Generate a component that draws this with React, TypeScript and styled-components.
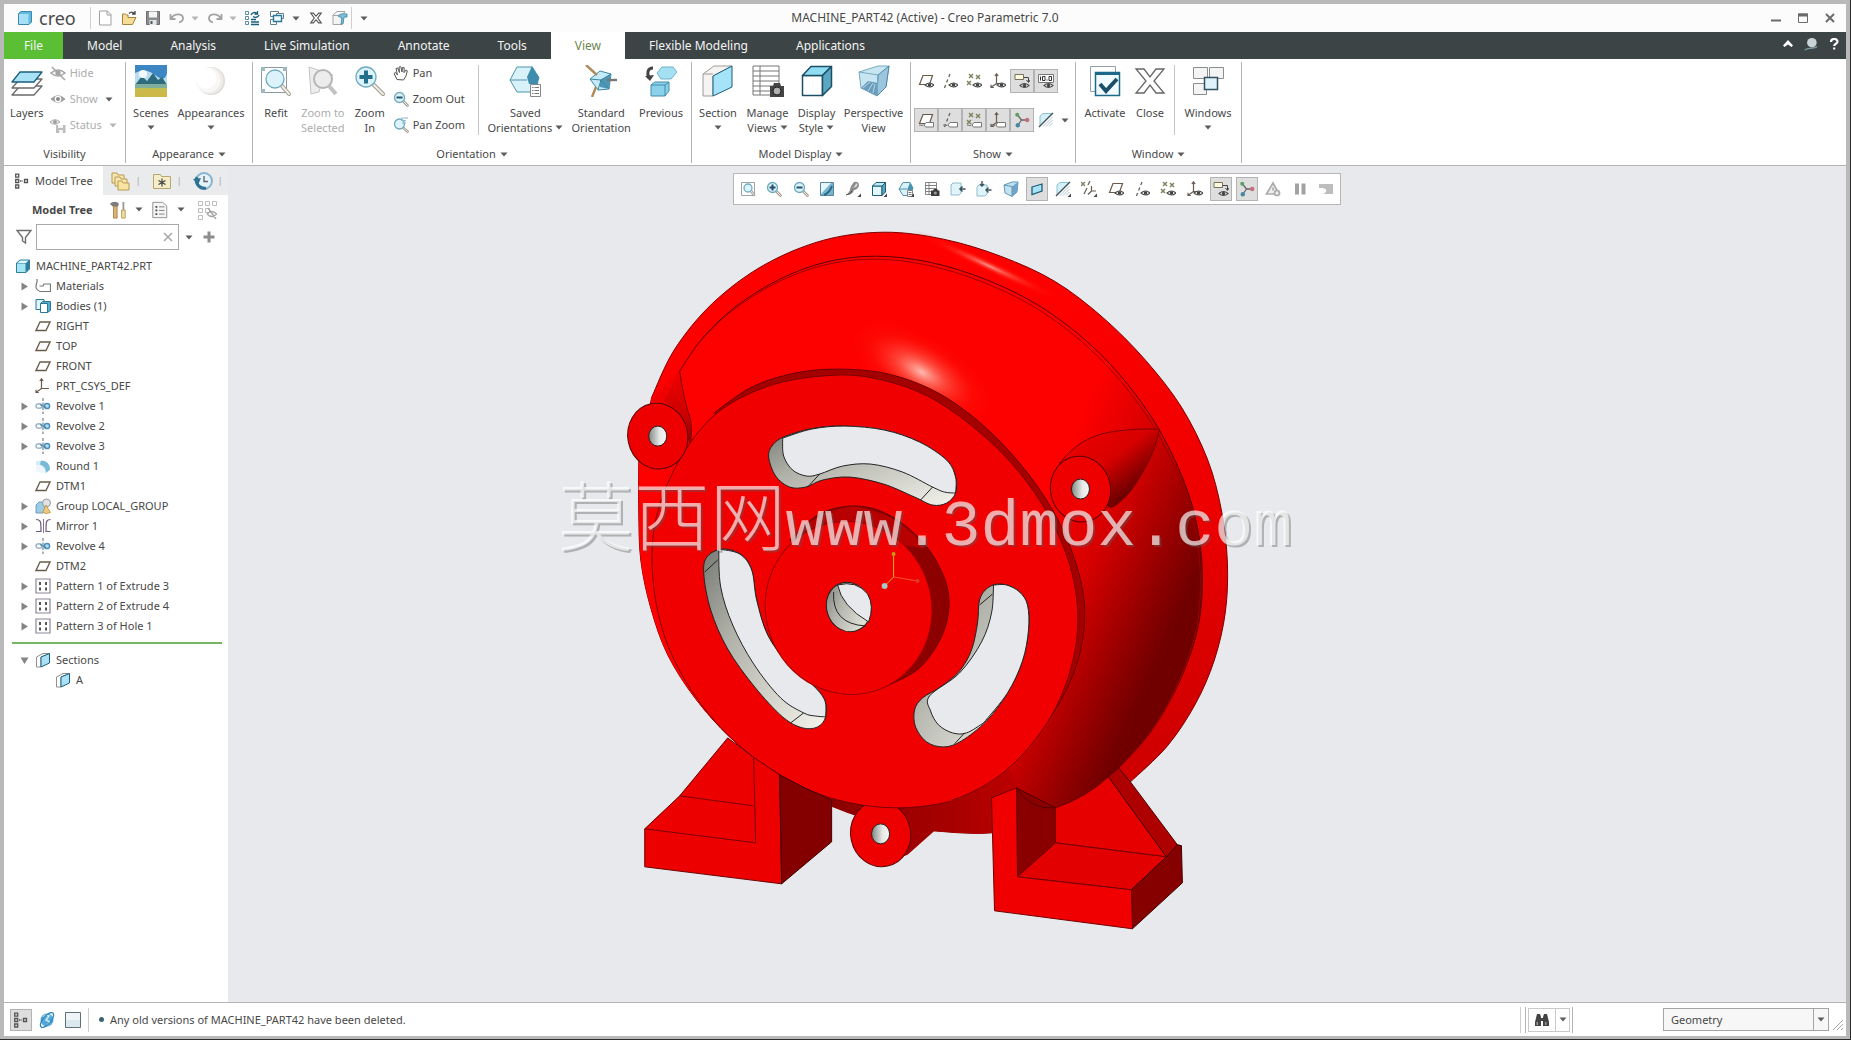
import React, { ReactNode } from "react";
import styled, { createGlobalStyle, css } from "styled-components";

const c = {
  frame: "#b9b9b9",
  bar: "#3c4446",
  text: "#484848",
  faded: "#adadad",
  line: "#b4b4b4",
  green: "#5abf35",
  canvas: "#e7e9ed",
  pressed: "#dedede",
  sky: "#a9e2f5",
  teal: "#1b5f7a",
};

const Global = createGlobalStyle`
  * { box-sizing: border-box; }
  html, body, #root { height: 100%; }
  body { margin: 0; background: #2b2b2b; overflow: hidden; }
  body, button, input, select { font-family: "Noto Sans", "Open Sans", "Noto Sans CJK SC", sans-serif; font-size: 11px; color: ${c.text}; }
  button { background: none; border: 0; padding: 0; margin: 0; }
  h1, h2, ul, p { margin: 0; padding: 0; font-weight: normal; list-style: none; }
  svg { display: block; flex: none; }
`;

/* ---------- icon parts ---------- */

const Eye = ({ x = 0, y = 0 }: { x?: number; y?: number }) => (
  <g transform={`translate(${x} ${y})`}>
    <path d="M0 3Q4.500 -1 9 3Q4.500 7 0 3Z" fill="#fff" stroke="#4a4a4a" strokeWidth="1.100" />
    <circle cx="4.500" cy="3" r="1.800" fill="#444" />
  </g>
);
const Tag = () => (
  <g fill="#fff" stroke="#777">
    <path d="M1 13.500c1.500-2 2 1.500 4.500-.5" fill="none" />
    <path d="M6 13l2-2.500h7.500V15H7.500z" />
  </g>
);
const Cross = ({ x, y }: { x: number; y: number }) => (
  <path d={`M${x} ${y}l4 4m0-4l-4 4`} stroke="#77835a" strokeWidth="1.400" />
);
const Glass = ({ x = 7, y = 7, r = 5, end = 15 }: { x?: number; y?: number; r?: number; end?: number }) => (
  <g>
    <path d={`M${x + r * 0.8} ${y + r * 0.8}L${end} ${end}`} stroke="#a39a90" strokeWidth={r > 6 ? 4 : 2.6} strokeLinecap="round" />
    <path d={`M${x + r * 0.8} ${y + r * 0.8}L${end} ${end}`} stroke="#f4efe8" strokeWidth={r > 6 ? 2 : 1} strokeLinecap="round" />
    <circle cx={x} cy={y} r={r} fill="#dcf3fb" stroke="#6fabbf" strokeWidth="1.300" />
  </g>
);
const planeShape = <path d="M5 2.500h9.500l-3 9H1.500z" fill="#fff" stroke="#6a5a48" strokeWidth="1.200" />;
const axisShape = <path d="M8 1L6.800 4M5.800 6.500L4.600 9.500M3.600 12L2.500 15" stroke="#6a6358" strokeWidth="1.300" />;
const pointsShape = <g fill="none"><Cross x={3} y={1} /><Cross x={10} y={2} /><Cross x={1} y={8} /></g>;
const csysShape = <path d="M6.500 1v9.500H14M6.500 10.500L1.500 14M4.800 3L6.500 .8L8.200 3M1 11.800V14.500h2.800" fill="none" stroke="#6a5b50" strokeWidth="1.200" />;
const spinShape = (
  <g>
    <path d="M3.500 3L7.500 8H13M7.500 8L4 13" stroke="#666" strokeWidth="1.300" fill="none" />
    <circle cx="3.200" cy="2.800" r="2" fill="#5d9e63" />
    <circle cx="13.200" cy="8" r="2.200" fill="#c4707c" />
    <circle cx="3.800" cy="13.200" r="2.200" fill="#4987a5" />
  </g>
);
const noteShape = <g><path d="M1 1.500h8.500v5H1z" fill="#fffbe0" stroke="#77705c" /><path d="M10 4.500h4.500V9M12.500 7l2 2.500l1.500-2.500" fill="none" stroke="#444" /></g>;
const boxShape = (
  <g stroke={c.teal} strokeLinejoin="round">
    <path d="M1.500 5v9.500h9.500V5z" fill="#e4f7fd" />
    <path d="M1.500 5L5 1.500h9.500L11 5z" fill="#bdeaf7" />
    <path d="M11 5l3.500-3.500V11L11 14.500z" fill="#5aa7c2" />
  </g>
);
const sectionShape = (
  <g strokeLinejoin="round">
    <path d="M1.500 5L8 1.500h6.500L6 5v10H1.500z" fill="#fff" stroke="#8f8f8f" />
    <path d="M6 5l8.500-3.500V11L6 15z" fill={c.sky} stroke={c.teal} />
  </g>
);
const cubeIso = (
  <g strokeLinejoin="round">
    <path d="M1 8L5 1.500h7L15 7l-3 7.500H5z" fill="#d9f2fa" stroke="#4d92ac" />
    <path d="M12 1.500L15 7l-3 7.500L9.500 8z" fill="#4a93b3" />
    <path d="M1 8h8.500" stroke="#4d92ac" />
  </g>
);
const hatchShape = (
  <g>
    <path d="M2 4l3-2.500h9L2 14z" fill="#d4eff8" stroke="#8fc0d2" />
    <path d="M5 14.500L14.500 5M8 14.500L14.500 8M11 14.500l3.500-3.500" stroke="#9cb6c0" strokeWidth=".8" />
    <path d="M1 15L15 1" stroke="#3f4f54" strokeWidth="1.300" />
  </g>
);
const tableCam = (
  <g>
    <path d="M1.500 1.500h11v12h-11zM1.500 4.500h11M1.500 7.500h11M1.500 10.500h11M5 1.500v12" fill="#fff" stroke="#777" strokeWidth=".9" />
    <path d="M7 9.500h2l1-1.500h3l1 1.500h1.500V15H7z" fill="#3b3b3b" />
    <circle cx="11.300" cy="12" r="1.600" fill="#999" />
  </g>
);
const corner = <path d="M16 12.500V16h-3.500z" fill="#444" />;
const treeShape = <g fill="none" stroke="#555" strokeWidth="1.300"><path d="M1.700 1.200h3v3h-3zM1.700 6.500h3v3h-3zM1.700 12h3v3h-3z" /><path d="M10.500 6.500h3v3h-3z" /><path d="M6 8h3" strokeDasharray="1.500 1" /></g>;
const revolveShape = (
  <g fill="none">
    <path d="M8 0v16" stroke="#5b6a72" strokeDasharray="3 1.500" />
    <ellipse cx="4" cy="8" rx="3" ry="2.300" stroke="#9cb6c7" strokeWidth="1.500" />
    <circle cx="12" cy="8" r="2.600" fill="#b9ddf2" stroke="#4a90bb" strokeWidth="1.500" />
    <path d="M5 6.500l6 3" stroke="#3f86ad" strokeWidth="1.300" />
  </g>
);

const art: Record<string, [number, ReactNode]> = {
  logo: [16, <g><path d="M1.500 3.500L4 1.500h10.500v10.500L12 14.500H1.500z" fill="#62b9de" stroke="#3a88ae" /><path d="M2 4h9.500v10H2z" fill="#a7e0f6" /></g>],
  fresh: [16, <path d="M2.500 1h8L14 4.500V15H2.500zM10 1v4h4" fill="#fff" stroke="#a0a0a0" />],
  open: [16, <g><path d="M1.500 4v10.500h10L15 7.500H7V5H5.500L4.500 4z" fill="#f6dc94" stroke="#a5833c" /><path d="M8 3.500c2-2 4-1.500 5.500 0M14 1v3h-3" fill="none" stroke="#444" strokeWidth="1.300" /></g>],
  save: [16, <g><path d="M1.500 1.500h13v13h-13z" fill="#8b8b8b" stroke="#6d6d6d" /><path d="M4 1.500h8v6H4z" fill="#f4f4f4" /><path d="M4.500 10h7v5h-7z" fill="#dfe8ec" /><path d="M5.500 11h2v3h-2z" fill="#555" /></g>],
  undo: [16, <path d="M1.500 4v5h5M2 8.500C5 3 14 3 14 8c0 2.500-2 4-4 4.500" fill="none" stroke="#a3a3a3" strokeWidth="1.800" />],
  redo: [16, <path d="M14.500 4v5h-5M14 8.500C11 3 2 3 2 8c0 2.500 2 4 4 4.500" fill="none" stroke="#a3a3a3" strokeWidth="1.800" />],
  regen: [16, <g fill="none" stroke={c.teal}><path d="M1.500 1.500h3v3h-3zM1.500 6.500h3v3h-3zM1.500 11.500h3v3h-3z" stroke="#5a8fa3" /><path d="M7 9.500h5M7 12h8M7 14.500h8" strokeWidth="1.300" /><path d="M7 5c1-3 4-3 6-1.500M13.500 1v3h-3M15 5c-1 2.500-4 3-6 1.500" strokeWidth="1.300" /></g>],
  wins: [16, <g fill="#fff" stroke="#667c86"><path d="M1.500 1.500h8v5h-8z" /><path d="M7.500 3.500h7v5h-7z" /><path d="M1.500 9.500h6v5h-6z" /><path d="M4.500 5.500h8v6h-8z" fill="#eefaff" stroke="#2c7898" strokeWidth="1.400" /></g>],
  cross: [16, <path d="M2 2.500h3l3 3.500l3-3.500h3L10 8l4 5.500h-3L8 10l-3 3.500H2L6 8z" fill="#fff" stroke="#555" strokeWidth="1.300" />],
  boxarrow: [16, <g><path d="M1 5l4-3.500h8L10 6v8.500H1z" fill="#f4f4f4" stroke="#a5a5a5" /><path d="M1 5.500h9" stroke="#a5a5a5" /><path d="M6 6c3-3 6-2 9-2v3h-3l-1 7H9l1-6z" fill="#7fc0d8" stroke="#4c94ae" /></g>],
  layers: [32, <g stroke="#6b6b6b" strokeWidth="1.300" strokeLinejoin="round"><path d="M9 21h22l-8 9H1z" fill="#fff" /><path d="M9 14h22l-8 9H1z" fill="#fff" /><path d="M9 7h22l-8 10H1z" fill={c.sky} stroke={c.teal} /></g>],
  hide: [16, <g><path d="M1 8q7-6 14 0q-7 6-14 0z" fill="none" stroke="#a6a6a6" strokeWidth="1.600" /><circle cx="8" cy="8" r="2.700" fill="#a6a6a6" /><path d="M2 2l13 13" stroke="#a6a6a6" strokeWidth="1.500" /></g>],
  show: [16, <g><path d="M1 8q7-6.500 14 0q-7 6.500-14 0z" fill="#9e9e9e" stroke="#9e9e9e" /><circle cx="8" cy="8" r="3.300" fill="#fff" /><circle cx="8" cy="8" r="2" fill="#888" /></g>],
  status: [16, <g><path d="M0 5q5-4.500 10 0q-5 4.500-10 0z" fill="#e7e7e7" stroke="#a6a6a6" /><circle cx="5" cy="5" r="1.800" fill="#999" /><path d="M6 8h9.500v8H6z" fill="#bcbcbc" /><path d="M8 8h5v3H8zM9 13h4v3H9z" fill="#f4f4f4" /></g>],
  scenes: [32, <g><path d="M0 0h32v32H0z" fill="#3d86c4" /><path d="M0 8q10-6 20 2t12-2v12H0z" fill="#b9dcef" /><path d="M0 20l7-9 5 5 6-8 5 7 4-3 5 8z" fill="#2e6b7d" /><path d="M0 19h32v13H0z" fill="#bfc04f" /><path d="M0 19h32v4H0z" fill="#7fae9c" /><path d="M0 26q16-4 32 1v5H0z" fill="#cdb94a" /><circle cx="8" cy="9" r="4" fill="#f2fbff" /></g>],
  sphere: [32, <g><circle cx="16" cy="16" r="14" fill="#dddbd7" /><circle cx="15" cy="15.500" r="13.500" fill="#eeece9" /><circle cx="13" cy="15" r="12.500" fill="#f8f7f5" /><circle cx="11" cy="13" r="10.500" fill="#fff" /></g>],
  refit: [32, <g><path d="M1.500 2.500h25v25h-25z" fill="#fff" stroke="#8a9aa0" /><path d="M1 2h4v4H1zM23 2h4v4h-4zM1 24h4v4H1z" fill="#9fb8c2" /><Glass x={15} y={14} r={9} end={29} /></g>],
  zoomsel: [32, <g><path d="M2 2l24 8-10 3-4 14-8 2z" fill="#ededed" stroke="#c4c4c4" /><circle cx="16" cy="14" r="9" fill="#ececec" stroke="#b5b5b5" strokeWidth="2" /><path d="M22 21l7 8" stroke="#c2c2c2" strokeWidth="4" /></g>],
  zoomin: [32, <g><Glass x={12} y={12} r={10} end={29} /><path d="M12 5.500v13M5.500 12h13" stroke="#23708c" strokeWidth="4" /></g>],
  pan: [16, <path d="M4 14.500L1 8.500l1.500-1 2 2.500L3 3.500l1.700-.5L6.500 7.500 6 2l1.800-.3L9 7l.5-4.500 1.700.2-.2 5L13 5l1.300.8L13 11l-2.500 4z" fill="#fff" stroke="#555" />],
  zoomout: [16, <g><Glass x={6.5} y={6.5} r={5} end={14.5} /><path d="M3.500 6.500h6" stroke="#23506a" strokeWidth="2" /></g>],
  zoomin16: [16, <g><Glass x={6.5} y={6.5} r={5} end={14.5} /><path d="M3.500 6.500h6M6.500 3.500v6" stroke="#23506a" strokeWidth="2" /></g>],
  panzoom: [16, <g><Glass x={6.5} y={7} r={5} end={14.5} /><path d="M8 1h7M8 3.500h5M9 6h4" stroke="#8fb8c8" /></g>],
  refit16: [16, <g><path d="M1.500 1.500h13v13h-13z" fill="#fff" stroke="#9aa5aa" /><Glass x={8} y={7} r={4} end={14} /></g>],
  saved: [32, <g strokeLinejoin="round"><path d="M1 15L8 2h15l7 11-7 14H8z" fill="#d9f2fa" stroke="#4d92ac" /><path d="M23 1l7 11-1 7h-9l-2-7z" fill="#3f8dad" /><path d="M1 15h17" stroke="#4d92ac" /><path d="M21.500 19.500h10v12h-10z" fill="#fff" stroke="#888" /><path d="M23 22.500h7M23 25.500h7M23 28.500h7" stroke="#777" strokeDasharray="1.500 1 6 0" /></g>],
  standard: [32, <g strokeLinejoin="round"><path d="M5 14L15 6l11 3-2 15-11 1z" fill="#c4ebf7" stroke="#3c86a4" /><path d="M15 15l11-6-2 15-9-2z" fill="#4f97b5" /><path d="M5 14l11 1 8 9M16 15l10-6M16 15l-3 10" fill="none" stroke="#3c86a4" /><path d="M1 0l11 10M11 22L7 32" stroke="#b08a5c" strokeWidth="2.400" /><path d="M22 15h10" stroke="#777" strokeWidth="2.400" /></g>],
  previous: [32, <g strokeLinejoin="round"><path d="M8 3C2 3 2 9 4 13" fill="none" stroke="#444" strokeWidth="3" /><path d="M0 11l5 5 4-6z" fill="#444" /><path d="M12 8l5-6h11l4 5-6 7H16z" fill="#a5dff2" stroke="#6fb3cb" /><path d="M6 20l4-3h14v9l-4 5H6z" fill="#8bd1ea" stroke="#3f8dad" /><path d="M6 20h14v11M20 20l4-3" fill="none" stroke="#3f8dad" /></g>],
  section: [32, <g strokeLinejoin="round"><path d="M1 9L12 1h18L11 11v20H1zM1 9h10" fill="#f6f3f3" stroke="#a09a9a" /><path d="M11 11L30 1v21L11 31z" fill="#a5e3f8" stroke={c.teal} /></g>],
  manage: [32, <g><path d="M1 1h26v29H1zM1 6h26M1 11h26M1 16h26M1 21h26M1 26h26M8 1v29" fill="#fff" stroke="#777" /><path d="M18 21h3l1-3h6l1 3h3v11H18z" fill="#444" /><circle cx="25" cy="26" r="4" fill="#b0b0b0" stroke="#222" /></g>],
  display: [32, <g stroke="#1c4f66" strokeWidth="1.500" strokeLinejoin="round"><path d="M1.500 10.500h20v20h-20z" fill="#fff" /><path d="M1.500 10.500L10 1.500h20.500L21.500 10.500z" fill="#8fdcf3" /><path d="M21.500 10.500l9-9v20l-9 9z" fill="#5aa7c2" /></g>],
  perspective: [32, <g strokeLinejoin="round"><path d="M1 7L20 1h11l-3 21-9 9L3 23z" fill="#c8e6f1" stroke="#75aabf" /><path d="M20 10l11-9-3 21-9 9z" fill="#9cc6de" stroke="#4e88a8" /><path d="M3 23l7-7 10 2-1 13z" fill="#6a9dbd" /><path d="M5 23l7-6M10 26l5-8M15 28l2-9" stroke="#b6d6e6" /><path d="M1 7l19 3-1 21" fill="none" stroke="#75aabf" /></g>],
  planeEye: [16, <g>{planeShape}<Eye x={7} y={9} /></g>],
  axisEye: [16, <g>{axisShape}<Eye x={7} y={9} /></g>],
  pointEye: [16, <g>{pointsShape}<Eye x={7} y={9} /></g>],
  csysEye: [16, <g>{csysShape}<Eye x={7} y={9} /></g>],
  noteEye: [16, <g>{noteShape}<Eye x={6} y={9.5} /></g>],
  dimEye: [16, <g><path d="M.5 1.500h15v8H.5z" fill="#fff" stroke="#777" /><path d="M2.500 3.500v4M4.500 3.500h2.500v4H4.500zM9 6.500v1M11 3.500h2.500v4H11z" fill="none" stroke="#333" /><Eye x={6} y={9.5} /></g>],
  planeTag: [16, <g>{planeShape}<Tag /></g>],
  axisTag: [16, <g>{axisShape}<Tag /></g>],
  pointTag: [16, <g>{pointsShape}<Tag /></g>],
  csysTag: [16, <g>{csysShape}<Tag /></g>],
  spin: [16, spinShape],
  hatch: [16, hatchShape],
  hatchMenu: [16, <g>{hatchShape}{corner}</g>],
  mixed: [16, <g><Cross x={0} y={1} /><path d="M9 0L7 4M6 7l-3 6" stroke="#666" strokeWidth="1.300" /><path d="M10.500 5v5H15M10.500 10L7 13.500" fill="none" stroke="#6b5b50" strokeWidth="1.200" />{corner}</g>],
  activate: [32, <g><path d="M1.500 1.500h25v25h-25z" fill="#fff" stroke="#94a0a5" /><path d="M6.500 7.500h24v23h-24z" fill="#f1fbff" stroke="#1d6888" strokeWidth="1.500" /><path d="M6 7h25v3H6z" fill="#1d6888" /><path d="M11 19l6 7L28 14" fill="none" stroke="#1b4f68" strokeWidth="4" /></g>],
  close: [32, <path d="M2 4h8l6 8 6-8h8L20 16l10 12h-8l-6-8-6 8H2l10-12z" fill="#fff" stroke="#666" strokeWidth="1.300" />],
  windows: [32, <g fill="#fff" stroke="#8a8f92"><path d="M1.500 2.500h14v11h-14zM17.500 2.500h14v11h-14zM1.500 18.500h13v11h-13z" fill="#f4f4f4" /><path d="M12.500 12.500h13v12h-13z" fill="#dff3fb" stroke="#33515e" strokeWidth="1.500" /></g>],
  repaint: [16, <g><path d="M1.500 1.500h13v13h-13z" fill="#75b5cf" stroke="#58859a" /><path d="M2 2h10L2 13z" fill="#e5f5fa" /><path d="M5 14c3-1 6-4 8-9" stroke="#2e6680" strokeWidth="2" fill="none" /></g>],
  brush: [16, <g><path d="M9 1q5-1 5 4-2 4-5 4-1 5-8 5 3-2 4-5 0-3 4-8z" fill="#8a8a8a" /><path d="M11 2q3 2 0 4l-4 1q3-1 4-5z" fill="#dcdcdc" /><path d="M1 14q5-1 6-4" stroke="#555" />{corner}</g>],
  box: [16, <g>{boxShape}{corner}</g>],
  iso: [16, <g>{cubeIso}<path d="M9.500 9.500h5v6h-5z" fill="#fff" stroke="#888" /><path d="M10.500 11.500h3M10.500 13.500h3" stroke="#777" />{corner}</g>],
  camera: [16, tableCam],
  boxin: [16, <g><path d="M1 4l2-2h8v10l-2 2H1z" fill="#dff4fb" stroke="#8fbccc" /><path d="M15.500 8H10M12.500 5.500L10 8l2.500 2.500" stroke="#3c5560" strokeWidth="1.600" fill="none" /></g>],
  boxin2: [16, <g><path d="M1 6l2-2h8v9l-2 2H1z" fill="#dff4fb" stroke="#8fbccc" /><path d="M15.500 9H10M12.500 6.500L10 9l2.500 2.500M6 0v5M4 3l2 2 2-2" stroke="#3c5560" strokeWidth="1.400" fill="none" /></g>],
  persp16: [16, <g><path d="M1 4l8-3h6l-1 10-5 4.500L2 12z" fill="#c1e2ef" stroke="#6299b3" /><path d="M9 5.500L15 1l-1 10-5 4.500z" fill="#6fa5cd" /><path d="M1 4l8 1.500v10" fill="none" stroke="#6299b3" /></g>],
  slab: [16, <path d="M3 6L13 3v7L3 13.500z" fill={c.sky} stroke={c.teal} strokeWidth="1.300" />],
  warn: [16, <g fill="#eee" stroke="#aaa" strokeWidth="1.700"><path d="M8 2l6 11H1.500z" /><path d="M8 6.500v3" /><circle cx="12" cy="12" r="2.500" /></g>],
  pause: [16, <path d="M3 2.500h4v11H3zM9.500 2.500h4v11h-4z" fill="#a2a2a2" />],
  resume: [16, <path d="M1 3h14v10H5c5-2 4-6-1-6H1z" fill="#bdbdbd" />],
  tree: [16, treeShape],
  folders: [20, <g><path d="M1 2h5l1 2h6v8H1z" fill="#f7e6b0" stroke="#b99a54" /><path d="M4 6h5l1 2h6v7H4z" fill="#f7e6b0" stroke="#b99a54" /><path d="M7 10h4l1 2h6v7H7z" fill="#f9e4a0" stroke="#b99a54" /></g>],
  star: [20, <g><path d="M1.500 3.500h7l1 2h9v12h-17z" fill="#f5edc8" stroke="#b9a66c" /><path d="M10 7.500v8M6.500 9.500l7 4M13.500 9.500l-7 4" stroke="#444" strokeWidth="1.200" /></g>],
  history: [20, <g><circle cx="11" cy="10" r="8" fill="#e3f3fb" stroke="#88b4cb" strokeWidth="2" /><path d="M13 17A8 8 0 0 1 4 6" fill="none" stroke="#2e7396" strokeWidth="3" /><path d="M0 8l5 6 3-7z" fill="#2e7396" /><path d="M11 5v5.500h4" fill="none" stroke="#666" strokeWidth="1.400" /></g>],
  tools: [20, <g><path d="M1 3c3-3 8-3 10 0l-1 3H4z" fill="#7d7d7d" /><path d="M5 6h4v13H5z" fill="#e0b274" stroke="#a87f4a" /><path d="M15 1h2v9h-2z" fill="#999" /><path d="M14 10h4v9h-4z" fill="#f0dca0" stroke="#b39a58" /></g>],
  list: [20, <g><path d="M2 1.500h11l4.500 4v13H2z" fill="#f5f5f5" stroke="#8b8b8b" /><path d="M5 6.500h2M5 10.500h2M5 14.500h2" stroke="#444" strokeWidth="2" /><path d="M9 6.500h6M9 10.500h6M9 14.500h6" stroke="#777" /></g>],
  grid: [20, <g fill="none" stroke="#bdbdbd"><path d="M1.500 1.500h4v4h-4zM1.500 8.500h4v4h-4zM1.500 15.500h4v4h-4zM8.500 1.500h4v4h-4zM15.500 1.500h4v4h-4zM8.500 8.500h4v4h-4z" /><path d="M10 14q5-5 9.500 0q-4.500 5-9.500 0M11 8l8 11" stroke="#a5a5a5" strokeWidth="1.300" /></g>],
  funnel: [16, <path d="M1 1.500h14L9.500 8.500V14L6.500 12V8.500z" fill="#fff" stroke="#6d6d6d" strokeWidth="1.400" />],
  part: [16, <g><path d="M1.500 5L5 2h9.500v9L11 14.500H1.500z" fill="#2f7f9c" stroke="#2f7f9c" strokeLinejoin="round" /><path d="M2 5.500h8.500v8.500H2z" fill="#a5e6f5" /><path d="M2.500 5L5 2.500h8.500L11 5z" fill="#dff8fd" /></g>],
  materials: [16, <path d="M2 1v3C0 9 1 12 5 13.500H15.500V6H9L8 8H4.500" fill="none" stroke="#777" strokeWidth="1.200" />],
  bodies: [16, <g stroke="#2c7894"><path d="M1 1.500h8v10H1z" fill="#dff5fc" /><path d="M5.500 5.500h7v9h-7z" fill="#fff" /><path d="M5.500 5.500l2-2h8v9l-3 2v-9z" fill="#54afd0" /></g>],
  plane: [16, <path d="M5 4h10l-4 8.500H1z" fill="#fff" stroke="#6a5a48" strokeWidth="1.300" />],
  csys: [16, csysShape],
  revolve: [16, revolveShape],
  round: [16, <g><path d="M1 3h7c5 1 7 5 7 9l-5 3c0-5-4-8-9-8z" fill="#d3ecf6" /><path d="M1 7v6l4 2h5c0-5-4-8-9-8z" fill="#edf6fa" /><path d="M6 2.500c6 0 9 4 9 9L11 15c0-5-2-7-6-8.500z" fill="#7ab9d6" /></g>],
  group: [16, <g><path d="M1 7l3-3h7v8l-3 3H1z" fill="#9ccbe5" stroke="#6a9fbe" /><circle cx="11.500" cy="5" r="4" fill="#dfe2e4" stroke="#9a9a9a" /><path d="M11 7l4.500 7.500q-4 2-8 0z" fill="#ecc983" stroke="#b98f3e" strokeWidth=".8" /></g>],
  mirror: [16, <g fill="none" stroke="#6d5b78" strokeWidth="1.200"><path d="M1 1.500c5 0 5 2 5 12H1M15.500 1.500c-4.500 0-4.500 2-4.500 12h4.500" /><path d="M8.500 1v14" stroke="#8d6f9c" strokeWidth="1" /></g>],
  pattern: [16, <g><path d="M1 1h14v14H1z" fill="#fff" stroke="#8b8698" strokeWidth="1.200" /><path d="M5 4v3M11 4v3M5 9.500v3M11 9.500v3" stroke="#555" strokeWidth="2" /></g>],
  section16: [16, sectionShape],
  globe: [16, <g><circle cx="8" cy="8" r="6.500" fill="#55a8d6" /><path d="M4 5q3-3 6-1l-3 4 4 2-3 4" fill="none" stroke="#c7e9f8" strokeWidth="1.600" /><ellipse cx="8" cy="8" rx="9" ry="4" transform="rotate(-50 8 8)" fill="none" stroke="#2e86bb" strokeWidth="1.300" /></g>],
  blank: [16, <g><path d="M.5 .5h15v15H.5z" fill="#eef4f7" stroke="#5f7078" /><path d="M1 8h14v7H1z" fill="#dbe8ee" /></g>],
  binocs: [16, <g fill="#444"><path d="M3 2h3l1 3v9H1V10zM13 2h-3L9 5v9h6V10z" /><path d="M6 6h4v3H6z" /><path d="M2.500 10h1.500v3H2.500zM11 10h1.500v3H11z" fill="#999" /></g>],
  min: [12, <path d="M1 8.500h10" stroke="#6b6b6b" strokeWidth="2" />],
  max: [12, <g><path d="M1.500 2h9v8.500h-9z" fill="none" stroke="#6b6b6b" /><path d="M1 1.500h10v3H1z" fill="#6b6b6b" /></g>],
  shut: [12, <path d="M2 2l8 8M10 2l-8 8" stroke="#6b6b6b" strokeWidth="2" />],
  up: [12, <path d="M1 7.500L6 2l5 5.500-1.500 1.500L6 6.500 2.500 9z" fill="#fff" />],
  person: [16, <g><circle cx="9" cy="6.500" r="5.500" fill="#c9d4d6" /><path d="M1 15c2-3 9-1 14-4" fill="none" stroke="#7f9aa2" strokeWidth="1.600" /></g>],
  help: [12, <path d="M3 4c0-4 6.500-4 6.500-.5C9.500 6 6.200 5.500 6.200 8M6.200 9.500v2" fill="none" stroke="#fff" strokeWidth="2.200" />],
  clear: [12, <path d="M2 2l8 8M10 2l-8 8" stroke="#a8a8a8" strokeWidth="1.600" />],
  plus: [12, <path d="M6 .5v11M.5 6h11" stroke="#8c8c8c" strokeWidth="3" />],
};

const Icon = ({ name, size }: { name: string; size?: number }) => {
  const [box, drawing] = art[name];
  return (
    <svg width={size ?? box} height={size ?? box} viewBox={`0 0 ${box} ${box}`} fill="none" aria-hidden="true">
      {drawing}
    </svg>
  );
};

const Caret = ({ pale }: { pale?: boolean }) => (
  <svg width="8" height="5" viewBox="0 0 8 5" aria-hidden="true"><path d="M.5 .5h7L4 4.500z" fill={pale ? "#b5b5b5" : "#5c5c5c"} /></svg>
);

/* ---------- window frame ---------- */

const Window = styled.div`
  display: flex; flex-direction: column; height: calc(100vh - 1px); margin-right: 1px;
  border: 4px solid ${c.frame}; border-bottom-width: 3px; background: #fff;
`;
const TitleBar = styled.header`
  display: grid; grid-template-columns: 1fr auto 1fr; align-items: center; height: 28px; flex: none; background: #fcfcfc;
`;
const QuickBar = styled.div`display: flex; align-items: center; height: 28px; padding-left: 13px;`;
const Brand = styled.span`
  display: flex; align-items: center; gap: 6px; width: 73px; font-size: 18px; line-height: 20px; color: #4a4a4a;
`;
const Rule = styled.i<{ $h: number }>`width: 1px; height: ${(p) => p.$h}px; background: #cfcfcf; flex: none;`;
const QuickButton = styled.button<{ $w: number }>`
  display: flex; align-items: center; justify-content: center; width: ${(p) => p.$w}px; height: 24px;
`;
const Title = styled.h1`font-size: 12px; line-height: 24px;`;
const WindowButtons = styled.div`display: flex; justify-content: flex-end; gap: 15px; padding-right: 10px;`;

const TabBar = styled.nav`display: flex; height: 27px; flex: none; background: ${c.bar};`;
const Tab = styled.button<{ $kind?: "file" | "active" }>`
  padding: 1px 24px 0; font-size: 12px; line-height: 26px; color: #f4f4f4;
  ${(p) => p.$kind === "file" && css`width: 59px; padding: 1px 0 0; background: ${c.green};`}
  ${(p) => p.$kind === "active" && css`background: #fff; color: #6e8650;`}
`;
const TabTools = styled.div`display: flex; align-items: center; gap: 10px; margin-left: auto; padding: 0 6px 3px 0;`;

/* ---------- ribbon ---------- */

const Ribbon = styled.div`
  display: flex; height: 107px; flex: none; padding-top: 3px; border-bottom: 1px solid ${c.line}; background: #fff;
`;
const Group = styled.section<{ $w: number }>`
  display: flex; flex-direction: column; width: ${(p) => p.$w}px; flex: none;
  height: 101px; border-right: 1px solid ${c.line};
`;
const GroupBody = styled.div`display: flex; height: 84px;`;
const GroupName = styled.h2`
  display: flex; align-items: center; justify-content: center; gap: 4px; font-size: 11px; line-height: 16px;
`;
const Big = styled.button<{ $w: number }>`
  display: flex; flex-direction: column; align-items: center; width: ${(p) => p.$w}px; padding-top: 3px; white-space: nowrap;
  &:disabled { color: ${c.faded}; }
`;
const BigLabel = styled.span`
  display: flex; flex-direction: column; align-items: center; margin-top: 8px; line-height: 15px;
`;
const CaretLine = styled.span`display: flex; align-items: center; gap: 3px; height: 15px;`;
const Stack = styled.div<{ $w: number }>`
  display: grid; grid-auto-rows: 26px; width: ${(p) => p.$w}px; align-content: start;
`;
const Small = styled.button`
  display: flex; align-items: center; gap: 4px; white-space: nowrap; line-height: 16px; height: 22px;
  &:disabled { color: ${c.faded}; }
  & > svg + svg, & > span + svg { margin-left: 3px; }
`;
const Divider = styled.i<{ $gap?: number }>`
  width: 1px; height: 70px; margin: 3px 0 0 ${(p) => p.$gap ?? 0}px; background: #c4c4c4; flex: none;
`;
const ShowRows = styled.div`display: flex; flex-direction: column; gap: 15px; padding: 7px 0 0 3px;`;
const ShowRow = styled.div`display: flex; align-items: center;`;
const Toggle = styled.button<{ $on?: boolean; $w?: number }>`
  display: flex; align-items: center; justify-content: center; width: ${(p) => p.$w ?? 24}px; height: 24px;
  ${(p) => p.$on && css`background: ${c.pressed}; box-shadow: inset 0 0 0 1px #b3b3b3;`}
`;

type BigProps = { icon: string; lines: string[]; w: number; menu?: "below" | "inline"; disabled?: boolean };
const BigButton = ({ icon, lines, w, menu, disabled }: BigProps) => (
  <Big $w={w} disabled={disabled}>
    <Icon name={icon} size={32} />
    <BigLabel>
      {lines.map((line, i) =>
        menu === "inline" && i === lines.length - 1 ? (
          <CaretLine key={line}>{line}<Caret /></CaretLine>
        ) : (
          <span key={line}>{line}</span>
        )
      )}
      {menu === "below" && <CaretLine><Caret /></CaretLine>}
    </BigLabel>
  </Big>
);

const RibbonGroup = ({ name, w, menu, children }: { name: string; w: number; menu?: boolean; children: ReactNode }) => (
  <Group $w={w}>
    <GroupBody>{children}</GroupBody>
    <GroupName>{name}{menu && <Caret />}</GroupName>
  </Group>
);

/* ---------- side panel ---------- */

const Main = styled.main`display: flex; flex: 1; min-height: 0;`;
const Side = styled.aside`display: flex; flex-direction: column; width: 224px; flex: none; background: #fff;`;
const SideTabs = styled.div`display: flex; height: 29px; background: #e9ebec;`;
const SideTab = styled.button<{ $active?: boolean }>`
  display: flex; align-items: center; gap: 5px; height: 29px;
  ${(p) => (p.$active
    ? css`width: 99px; padding-left: 10px; background: #fff;`
    : css`width: 41px; padding-left: 8px; color: #999; font-size: 8px;`)}
`;
const SideHead = styled.div`display: flex; align-items: center; gap: 8px; height: 29px; padding-left: 28px;`;
const SideTitle = styled.h2`font-weight: bold; font-size: 11px; width: 69px; white-space: nowrap;`;
const IconButton = styled.button<{ $gap?: number }>`
  display: flex; align-items: center; margin-left: ${(p) => p.$gap ?? 0}px;
`;
const FilterRow = styled.div`display: flex; align-items: center; height: 26px; padding-left: 12px;`;
const FilterBox = styled.label`
  display: flex; align-items: center; width: 143px; height: 26px; margin: 0 6px 0 4px; padding-right: 4px; border: 1px solid #a9a9a9;
`;
const FilterInput = styled.input`flex: 1; min-width: 0; height: 22px; border: 0; outline: 0; background: none;`;
const Tree = styled.ul`padding-top: 6px;`;
const TreeRow = styled.li<{ $depth: number }>`
  display: flex; align-items: center; gap: 5px; height: 20px; line-height: 20px; white-space: nowrap;
  padding-left: ${(p) => [11, 14, 34][p.$depth]}px;
`;
const Twisty = styled.span`display: flex; justify-content: center; width: 12px;`;
const InsertLine = styled.hr`height: 2px; margin: 6px 6px 6px 8px; border: 0; background: #76b563;`;

type Node = { icon: string; label: string; depth?: number; open?: boolean; branch?: boolean };
const features: Node[] = [
  { icon: "materials", label: "Materials", branch: true },
  { icon: "bodies", label: "Bodies (1)", branch: true },
  { icon: "plane", label: "RIGHT" },
  { icon: "plane", label: "TOP" },
  { icon: "plane", label: "FRONT" },
  { icon: "csys", label: "PRT_CSYS_DEF" },
  { icon: "revolve", label: "Revolve 1", branch: true },
  { icon: "revolve", label: "Revolve 2", branch: true },
  { icon: "revolve", label: "Revolve 3", branch: true },
  { icon: "round", label: "Round 1" },
  { icon: "plane", label: "DTM1" },
  { icon: "group", label: "Group LOCAL_GROUP", branch: true },
  { icon: "mirror", label: "Mirror 1", branch: true },
  { icon: "revolve", label: "Revolve 4", branch: true },
  { icon: "plane", label: "DTM2" },
  { icon: "pattern", label: "Pattern 1 of Extrude 3", branch: true },
  { icon: "pattern", label: "Pattern 2 of Extrude 4", branch: true },
  { icon: "pattern", label: "Pattern 3 of Hole 1", branch: true },
];

const Feature = ({ icon, label, depth = 1, branch, open }: Node) => (
  <TreeRow $depth={depth}>
    {depth > 0 && (
      <Twisty>
        {branch && (
          <svg width="9" height="9" viewBox="0 0 9 9" aria-hidden="true">
            <path d={open ? "M.5 1.500h8L4.500 8z" : "M1.500 .5v8L8 4.500z"} fill="#858585" />
          </svg>
        )}
      </Twisty>
    )}
    <Icon name={icon} />
    {label}
  </TreeRow>
);

/* ---------- graphics area ---------- */

const Canvas = styled.section`position: relative; flex: 1; min-width: 0; background: ${c.canvas};`;
const Scene = styled.svg`width: 100%; height: 100%;`;
const ViewBar = styled.div`
  position: absolute; top: 7px; left: 50%; transform: translateX(-50%);
  display: flex; align-items: center; justify-content: space-between; width: 608px; height: 32px; padding: 0 3px;
  background: #fff; border: 1px solid #b9b5b5;
`;
const Watermark = styled.text`
  font-family: "Liberation Mono", "Noto Sans CJK SC", monospace; font-size: 65px; fill: rgba(255, 255, 255, 0.66);
  filter: drop-shadow(2px 2px 0 rgba(90, 90, 90, 0.6));
`;
const WatermarkName = styled.tspan`font-family: "Noto Sans CJK SC", sans-serif; font-size: 76px; font-weight: 300;`;

type P = [number, number];
/* Catmull-Rom through the given points, written as cubic Béziers. */
const smooth = (pts: P[], closed = false) => {
  const n = pts.length;
  const at = (i: number) => (closed ? pts[(i + n) % n] : pts[Math.max(0, Math.min(n - 1, i))]);
  let d = `M${pts[0]}`;
  for (let i = 0; i < (closed ? n : n - 1); i++) {
    const [a, b, e, f] = [at(i - 1), at(i), at(i + 1), at(i + 2)];
    d += `C${b[0] + (e[0] - a[0]) / 6} ${b[1] + (e[1] - a[1]) / 6} ${e[0] - (f[0] - b[0]) / 6} ${e[1] - (f[1] - b[1]) / 6} ${e[0]} ${e[1]}`;
  }
  return closed ? d + "Z" : d;
};
const onto = (d: string) => "L" + d.slice(1);

const rimOuter: P[] = [[652, 397], [675, 349], [713, 303], [764, 265], [824, 240], [885, 232], [944, 239], [1001, 256], [1055, 281], [1103, 317], [1146, 360], [1182, 407], [1208, 459], [1222, 510], [1228, 562], [1226, 612], [1215, 660], [1196, 704], [1168, 746], [1131, 782]];
const rimInner: P[] = [[680, 371], [702, 339], [734, 308], [778, 280], [826, 262], [876, 256], [930, 262], [988, 280], [1045, 309], [1099, 352], [1144, 405], [1176, 461], [1196, 518], [1203, 575], [1198, 630], [1179, 684], [1152, 731], [1119, 768]];
const bodyLow: P[] = [[1119, 768], [1080, 800], [1040, 822], [992, 833], [935, 831], [880, 823], [828, 803], [776, 774], [731, 738], [696, 699], [668, 655], [651, 608], [641, 560], [639, 510], [639, 460]];
const diskEdge: P[] = [[714, 413], [752, 387], [795, 373], [840, 369], [889, 374], [937, 392], [981, 423], [1020, 463], [1052, 508], [1074, 556], [1085, 605], [1080, 655], [1060, 703], [1028, 746], [985, 783], [898, 810]];
const diskFace: P[] = [[836, 375], [883, 380], [928, 396], [970, 424], [1010, 461], [1043, 505], [1067, 555], [1078, 608], [1073, 662], [1050, 719], [1007, 770], [953, 800], [893, 808], [834, 799], [779, 774], [731, 738], [692, 691], [665, 637], [653, 577], [656, 520], [678, 463], [716, 414], [772, 385]];
const slotTopUpper: P[] = [[783, 438], [812, 429], [845, 426], [885, 430], [920, 442], [947, 460], [956, 477], [956, 493]];
const slotTop: P[] = [[769, 457], [773, 445], [786, 436], [815, 428], [845, 426], [885, 430], [920, 442], [947, 460], [956, 477], [956, 493], [947, 503], [933, 505], [915, 497], [884, 484], [850, 477], [823, 480], [806, 487], [790, 487], [776, 476]];
const slotTopBack: P[] = [[956, 493], [945, 492], [933, 487], [903, 472], [871, 464], [843, 466], [820, 474], [807, 476], [793, 470], [784, 456], [783, 438]];
const slotLeft: P[] = [[724, 549], [742, 555], [752, 570], [757, 600], [768, 635], [788, 663], [812, 684], [825, 700], [826, 717], [818, 727], [803, 728], [783, 717], [755, 687], [728, 649], [711, 610], [704, 573], [708, 556]];
const slotLeftOuter: P[] = [[719, 549], [740, 554], [752, 570], [757, 600], [768, 635], [788, 663], [812, 684], [825, 700], [826, 717]];
const slotLeftBack: P[] = [[826, 717], [815, 716], [804, 713], [781, 698], [754, 664], [733, 625], [721, 587], [719, 549]];
const slotRight: P[] = [[1001, 584], [1018, 590], [1028, 605], [1029, 630], [1023, 661], [1008, 693], [987, 721], [962, 741], [944, 747], [927, 742], [916, 727], [915, 710], [923, 698], [941, 687], [960, 671], [972, 650], [978, 623], [980, 600], [988, 588]];
const slotRightOuter: P[] = [[994, 585], [1007, 585], [1020, 592], [1028, 605], [1029, 630], [1023, 661], [1008, 693], [984, 723]];
const slotRightBack: P[] = [[984, 723], [967, 733], [953, 733], [939, 725], [931, 711], [930, 696], [960, 673], [982, 642], [992, 613], [994, 585]];
const hubSide: P[] = [[790, 540], [818, 515], [850, 506], [881, 511], [911, 530], [935, 558], [949, 594], [944, 632], [921, 667], [890, 685]];

const Ear = ({ x, y }: { x: number; y: number }) => (
  <g>
    <ellipse cx={x} cy={y} rx="30" ry="33" fill="#ee0000" stroke="#5a0000" transform={`rotate(-12 ${x} ${y})`} />
    <ellipse cx={x} cy={y} rx="9" ry="10" fill="url(#bore)" stroke="#222" />
  </g>
);

const Machine = () => (
  <Scene viewBox="228 166 1619 836" role="img" aria-label="MACHINE_PART42 model">
    <defs>
      <linearGradient id="shell" gradientUnits="userSpaceOnUse" x1="1050" y1="490" x2="1205" y2="560">
        <stop offset="0" stopColor="#fd0000" /><stop offset=".4" stopColor="#d60000" /><stop offset=".85" stopColor="#880000" /><stop offset="1" stopColor="#700000" />
      </linearGradient>
      <linearGradient id="rim" gradientUnits="userSpaceOnUse" x1="1000" y1="300" x2="1180" y2="740">
        <stop offset="0" stopColor="#ff0000" /><stop offset=".55" stopColor="#ee0000" /><stop offset="1" stopColor="#d00000" />
      </linearGradient>
      <radialGradient id="glow"><stop offset="0" stopColor="#ffc4b8" stopOpacity=".95" /><stop offset=".3" stopColor="#ff6a58" stopOpacity=".65" /><stop offset=".65" stopColor="#ff2010" stopOpacity=".3" /><stop offset="1" stopColor="#ff0000" stopOpacity="0" /></radialGradient>
      <linearGradient id="metal" x1="0" y1="0" x2="1" y2="1"><stop offset="0" stopColor="#777b74" /><stop offset=".35" stopColor="#b0b1a9" /><stop offset="1" stopColor="#f4f4ec" /></linearGradient>
      <linearGradient id="bore" x1="0" y1="0" x2="1" y2="0"><stop offset="0" stopColor="#7f8781" /><stop offset=".6" stopColor="#e6e8e6" /><stop offset="1" stopColor="#f6f6f6" /></linearGradient>
      <linearGradient id="tail" x1="0" y1="0" x2="1" y2="1"><stop offset="0" stopColor="#f40000" /><stop offset=".45" stopColor="#d80000" /><stop offset=".75" stopColor="#6c0000" /></linearGradient>
      <linearGradient id="neck" x1="0" y1="0" x2="0" y2="1"><stop offset="0" stopColor="#f00000" /><stop offset=".6" stopColor="#cc0000" /><stop offset="1" stopColor="#860000" /></linearGradient>
      <linearGradient id="under" x1="0" y1="0" x2="1" y2="0"><stop offset="0" stopColor="#8c0000" /><stop offset=".6" stopColor="#a80000" /><stop offset="1" stopColor="#c40000" /></linearGradient>
    </defs>

    <g strokeLinejoin="round" strokeWidth="1">
      <path d={smooth(rimOuter) + onto(smooth(bodyLow)) + "Z"} fill="url(#rim)" stroke="#7a0000" />
      <path d={smooth(rimInner) + onto(smooth(bodyLow)) + "L652 397Z"} fill="url(#shell)" />
      <path d={smooth(rimInner)} fill="none" stroke="#5c0000" />
      <path d={smooth(rimInner)} fill="none" stroke="#9c0000" transform="translate(-2 3)" />
      <ellipse cx="990" cy="266" rx="85" ry="7" transform="rotate(25 990 266)" fill="url(#glow)" opacity=".8" />
      <ellipse cx="922" cy="372" rx="88" ry="40" transform="rotate(31 922 372)" fill="url(#glow)" />

      <path d="M832 798L1010 770L1040 822L992 833Q900 836 832 807Z" fill="url(#under)" />
      <path d="M680 371Q684 400 691 420Q693 435 690 446L660 470L640 420L655 396Z" fill="#f00000" />
      <path d="M680 371Q684 400 691 420Q693 435 690 446Q684 414 664 402Z" fill="url(#neck)" />
      <path d="M680 371Q684 400 691 420Q693 435 690 446" fill="none" stroke="#7a0000" />

      <path d={smooth(diskEdge) + "L836 590Z"} fill="#a40000" />
      <path d={smooth(diskEdge)} fill="none" stroke="#650000" />
      <path d={smooth(diskFace, true)} fill="#f00000" stroke="#7a0000" />
      <Ear x={658} y={436} />

      <path d="M1060 463Q1076 444 1091 438Q1112 428 1160 429Q1156 456 1132 490Q1122 503 1111 508Z" fill="url(#tail)" stroke="#7a0000" />
      <Ear x={1081} y={489} />

      <path d={smooth(slotTop, true)} fill="url(#metal)" stroke="#222" />
      <path d={smooth(slotTopUpper) + onto(smooth(slotTopBack)) + "Z"} fill={c.canvas} stroke="#222" />
      <path d="M820 474L808 487M933 487L921 500" stroke="#222" />
      <path d={smooth(slotLeft, true)} fill="url(#metal)" stroke="#222" />
      <path d={smooth(slotLeftOuter) + onto(smooth(slotLeftBack)) + "Z"} fill={c.canvas} stroke="#222" />
      <path d="M804 713L791 723M705 572L718 560" stroke="#222" />
      <path d={smooth(slotRight, true)} fill="url(#metal)" stroke="#222" />
      <path d={smooth(slotRightOuter) + onto(smooth(slotRightBack)) + "Z"} fill={c.canvas} stroke="#222" />
      <path d="M965 733L955 744M980 605L993 594" stroke="#222" />

      <path d={smooth(hubSide) + "Z"} fill="#8c0000" />
      <path d="M790 540Q815 512 852 506Q900 512 925 548L900 545Q850 500 790 540Z" fill="#b80000" />
      <path d={smooth(hubSide)} fill="none" stroke="#6a0000" />
      <ellipse cx="849" cy="608" rx="83" ry="87" transform="rotate(-20 849 608)" fill="#f00000" stroke="#9a0000" />
      <ellipse cx="849" cy="607" rx="22" ry="25" transform="rotate(-18 849 607)" fill="url(#metal)" stroke="#222" />
      <path d="M838 585Q842 606 869 622Q875 606 868 594Q857 580 838 585Z" fill={c.canvas} stroke="#222" />
      <path d="M834 592Q832 624 866 626" fill="none" stroke="#222" />

      <path d="M728 738L680 796L645 829V867L782 884L780 775Q752 757 728 738Z" fill="#ec0000" stroke="#6a0000" />
      <path d="M780 775L782 884L832 842V800Q806 790 780 775Z" fill="#840000" stroke="#3c0000" />
      <path d="M645 829L756 843L754 758M680 796L754 806" fill="none" stroke="#7a0000" />

      <path d="M890 808L928 823L935 831L908 855L880 866Z" fill="#a00000" />
      <Ear x={881} y={834} />
      <path d="M840 800Q868 808 898 808Q925 808 953 801L940 790L860 790Z" fill="#f00000" />
      <path d="M834 799Q866 808 898 808Q925 808 953 801" fill="none" stroke="#7a0000" />

      <path d="M1017 788L1056 808V843L1018 877Z" fill="#8a0000" stroke="#500000" />
      <path d="M1056 808Q1086 798 1109 777L1167 857L1056 843Z" fill="#e60000" stroke="#700000" />
      <path d="M1056 843L1167 857L1132 890L1018 877Z" fill="#e20000" stroke="#700000" />
      <path d="M1109 777L1119 768L1131 782L1178 845L1182 846L1167 857Z" fill="#ae0000" stroke="#500000" />
      <path d="M1167 857L1178 845L1182 846L1183 883L1133 929L1132 890Z" fill="#860000" stroke="#3c0000" />
      <path d="M992 798L1017 788L1018 877L1132 890L1133 929L995 911Z" fill="#f00000" stroke="#700000" />
      <path d="M1017 788Q1030 810 1056 808" fill="none" stroke="#500000" />
    </g>

    <g fill="none" strokeWidth="1">
      <path d="M894 554V577L885 586" stroke="#d8b020" />
      <path d="M894 577L918 581" stroke="#ff5030" />
      <circle cx="894" cy="554" r="2" fill="#c59a18" /><circle cx="885" cy="586" r="3" fill="#a9c7c4" /><circle cx="918" cy="581" r="2" fill="#e23b22" />
    </g>

    <Watermark x="558" y="545"><WatermarkName>莫西网</WatermarkName>www.3dmox.com</Watermark>
  </Scene>
);

const viewTools: [string, string, boolean?][] = [
  ["refit16", "Refit"], ["zoomin16", "Zoom in"], ["zoomout", "Zoom out"], ["repaint", "Repaint"], ["brush", "Rendering"],
  ["box", "Display style"], ["iso", "Saved orientations"], ["camera", "View manager"], ["boxin", "Annotate"], ["boxin2", "Fit"],
  ["persp16", "Perspective"], ["slab", "Section", true], ["hatchMenu", "Hatching"], ["mixed", "Datum filters"], ["planeEye", "Planes"],
  ["axisEye", "Axes"], ["pointEye", "Points"], ["csysEye", "Csys"], ["noteEye", "Notes", true], ["spin", "Spin center", true],
  ["warn", "Simulate"], ["pause", "Pause"], ["resume", "Resume"],
];

/* ---------- status bar ---------- */

const StatusBar = styled.footer`
  display: flex; align-items: center; height: 34px; flex: none; padding: 0 2px 0 6px; border-top: 1px solid ${c.line}; background: #fff;
`;
const PanelToggle = styled.button<{ $on?: boolean }>`
  display: flex; align-items: center; justify-content: center; width: 22px; height: 22px; margin-right: 4px;
  ${(p) => p.$on && css`background: ${c.pressed}; box-shadow: inset 0 0 0 1px #b3b3b3;`}
`;
const Message = styled.p`
  display: flex; align-items: center; gap: 6px; padding-left: 10px; line-height: 16px;
  &::before { content: ""; width: 5px; height: 5px; border-radius: 50%; background: #3b6472; }
`;
const FindArea = styled.div`display: flex; align-items: center; gap: 4px; margin: 0 90px 0 auto;`;
const FindBox = styled.div`
  display: flex; align-items: center; height: 26px; padding: 0 2px; border-left: 1px solid ${c.line}; border-right: 1px solid ${c.line};
`;
const FindButton = styled.button<{ $w: number }>`
  display: flex; align-items: center; justify-content: center; width: ${(p) => p.$w}px; height: 24px; border: 1px solid #c9c9c9;
  & + & { border-left: 0; }
`;
const Picker = styled.div`display: grid; grid-template-columns: 149px 15px; height: 23px; border: 1px solid #a5a5a5; background: #f7f7f7;`;
const PickerSelect = styled.select`
  grid-area: 1 / 1 / 2 / 3; appearance: none; border: 0; padding: 0 7px; background: transparent; outline: 0; height: 21px;
`;
const PickerArrow = styled.span`
  grid-area: 1 / 2; display: flex; align-items: center; justify-content: center; border-left: 1px solid #a5a5a5; pointer-events: none;
`;

const ribbonTabs = ["Model", "Analysis", "Live Simulation", "Annotate", "Tools", "View", "Flexible Modeling", "Applications"];

export default function App() {
  return (
    <>
      <Global />
      <Window>
        <TitleBar>
          <QuickBar>
            <Brand><Icon name="logo" />creo</Brand>
            <Rule $h={22} />
            <QuickButton $w={28} aria-label="New"><Icon name="fresh" /></QuickButton>
            <QuickButton $w={20} aria-label="Open"><Icon name="open" /></QuickButton>
            <QuickButton $w={28} aria-label="Save"><Icon name="save" /></QuickButton>
            <QuickButton $w={20} aria-label="Undo"><Icon name="undo" /></QuickButton>
            <QuickButton $w={16} aria-label="Undo list"><Caret pale /></QuickButton>
            <QuickButton $w={24} aria-label="Redo"><Icon name="redo" /></QuickButton>
            <QuickButton $w={12} aria-label="Redo list"><Caret pale /></QuickButton>
            <QuickButton $w={26} aria-label="Regenerate"><Icon name="regen" /></QuickButton>
            <QuickButton $w={24} aria-label="Windows"><Icon name="wins" /></QuickButton>
            <QuickButton $w={14} aria-label="Window list"><Caret /></QuickButton>
            <QuickButton $w={26} aria-label="Close window"><Icon name="cross" size={14} /></QuickButton>
            <QuickButton $w={22} aria-label="Erase"><Icon name="boxarrow" /></QuickButton>
            <Rule $h={22} />
            <QuickButton $w={24} aria-label="Customize"><Caret /></QuickButton>
          </QuickBar>
          <Title>MACHINE_PART42 (Active) - Creo Parametric 7.0</Title>
          <WindowButtons>
            <IconButton aria-label="Minimize"><Icon name="min" /></IconButton>
            <IconButton aria-label="Maximize"><Icon name="max" /></IconButton>
            <IconButton aria-label="Close"><Icon name="shut" /></IconButton>
          </WindowButtons>
        </TitleBar>

        <TabBar>
          <Tab $kind="file">File</Tab>
          {ribbonTabs.map((t) => <Tab key={t} $kind={t === "View" ? "active" : undefined}>{t}</Tab>)}
          <TabTools>
            <IconButton aria-label="Collapse ribbon"><Icon name="up" /></IconButton>
            <IconButton aria-label="Account"><Icon name="person" size={14} /></IconButton>
            <IconButton aria-label="Help"><Icon name="help" /></IconButton>
          </TabTools>
        </TabBar>

        <Ribbon>
          <RibbonGroup name="Visibility" w={122}>
            <BigButton icon="layers" lines={["Layers"]} w={46} />
            <Stack $w={76}>
              <Small disabled><Icon name="hide" />Hide</Small>
              <Small disabled><Icon name="show" /><span>Show</span><Caret /></Small>
              <Small disabled><Icon name="status" /><span>Status</span><Caret pale /></Small>
            </Stack>
          </RibbonGroup>
          <RibbonGroup name="Appearance" w={127} menu>
            <BigButton icon="scenes" lines={["Scenes"]} w={50} menu="below" />
            <BigButton icon="sphere" lines={["Appearances"]} w={70} menu="below" />
          </RibbonGroup>
          <RibbonGroup name="Orientation" w={439} menu>
            <BigButton icon="refit" lines={["Refit"]} w={46} />
            <BigButton icon="zoomsel" lines={["Zoom to", "Selected"]} w={48} disabled />
            <BigButton icon="zoomin" lines={["Zoom", "In"]} w={46} />
            <Stack $w={86}>
              <Small><Icon name="pan" />Pan</Small>
              <Small><Icon name="zoomout" />Zoom Out</Small>
              <Small><Icon name="panzoom" />Pan Zoom</Small>
            </Stack>
            <Divider />
            <BigButton icon="saved" lines={["Saved", "Orientations"]} w={92} menu="inline" />
            <BigButton icon="standard" lines={["Standard", "Orientation"]} w={60} />
            <BigButton icon="previous" lines={["Previous"]} w={60} />
          </RibbonGroup>
          <RibbonGroup name="Model Display" w={219} menu>
            <BigButton icon="section" lines={["Section"]} w={52} menu="below" />
            <BigButton icon="manage" lines={["Manage", "Views"]} w={47} menu="inline" />
            <BigButton icon="display" lines={["Display", "Style"]} w={51} menu="inline" />
            <BigButton icon="perspective" lines={["Perspective", "View"]} w={63} />
          </RibbonGroup>
          <RibbonGroup name="Show" w={165} menu>
            <ShowRows>
              <ShowRow>
                {["planeEye", "axisEye", "pointEye", "csysEye"].map((n) => <Toggle key={n} aria-label={n}><Icon name={n} /></Toggle>)}
                {["noteEye", "dimEye"].map((n) => <Toggle key={n} $on aria-label={n}><Icon name={n} /></Toggle>)}
              </ShowRow>
              <ShowRow>
                {["planeTag", "axisTag", "pointTag", "csysTag", "spin"].map((n) => <Toggle key={n} $on aria-label={n}><Icon name={n} /></Toggle>)}
                <Toggle aria-label="Hatching"><Icon name="hatch" /></Toggle>
                <Toggle $w={14} aria-label="More"><Caret /></Toggle>
              </ShowRow>
            </ShowRows>
          </RibbonGroup>
          <RibbonGroup name="Window" w={166} menu>
            <BigButton icon="activate" lines={["Activate"]} w={58} />
            <BigButton icon="close" lines={["Close"]} w={32} />
            <Divider $gap={8} />
            <BigButton icon="windows" lines={["Windows"]} w={66} menu="below" />
          </RibbonGroup>
        </Ribbon>

        <Main>
          <Side>
            <SideTabs>
              <SideTab $active><Icon name="tree" />Model Tree</SideTab>
              <SideTab aria-label="Folder browser"><Icon name="folders" />|</SideTab>
              <SideTab aria-label="Favorites"><Icon name="star" />|</SideTab>
              <SideTab aria-label="History"><Icon name="history" />|</SideTab>
            </SideTabs>
            <SideHead>
              <SideTitle>Model Tree</SideTitle>
              <IconButton aria-label="Settings"><Icon name="tools" size={18} /></IconButton>
              <Caret />
              <IconButton aria-label="Show list"><Icon name="list" size={18} /></IconButton>
              <Caret />
              <IconButton $gap={4} aria-label="Columns"><Icon name="grid" /></IconButton>
            </SideHead>
            <FilterRow>
              <Icon name="funnel" />
              <FilterBox>
                <FilterInput type="text" aria-label="Filter" />
                <Icon name="clear" />
              </FilterBox>
              <Caret />
              <IconButton $gap={10} aria-label="Add filter"><Icon name="plus" /></IconButton>
            </FilterRow>
            <Tree>
              <Feature icon="part" label="MACHINE_PART42.PRT" depth={0} />
              {features.map((f) => <Feature key={f.label} {...f} />)}
            </Tree>
            <InsertLine />
            <ul>
              <Feature icon="section16" label="Sections" branch open />
              <Feature icon="section16" label="A" depth={2} />
            </ul>
          </Side>
          <Canvas>
            <Machine />
            <ViewBar>
              {viewTools.map(([icon, label, on]) => (
                <Toggle key={label} $w={22} $on={on} aria-label={label}><Icon name={icon} /></Toggle>
              ))}
            </ViewBar>
          </Canvas>
        </Main>

        <StatusBar>
          <PanelToggle $on aria-label="Model tree panel"><Icon name="tree" /></PanelToggle>
          <PanelToggle aria-label="Browser"><Icon name="globe" /></PanelToggle>
          <PanelToggle aria-label="Full screen"><Icon name="blank" /></PanelToggle>
          <Rule $h={24} />
          <Message>Any old versions of MACHINE_PART42 have been deleted.</Message>
          <FindArea>
            <Rule $h={26} />
            <FindBox>
              <FindButton $w={28} aria-label="Find"><Icon name="binocs" /></FindButton>
              <FindButton $w={14} aria-label="Find options"><Caret /></FindButton>
            </FindBox>
          </FindArea>
          <Picker>
            <PickerSelect aria-label="Selection filter" defaultValue="Geometry"><option>Geometry</option></PickerSelect>
            <PickerArrow><Caret /></PickerArrow>
          </Picker>
          <svg width="15" height="24" viewBox="0 0 15 24" aria-hidden="true"><path d="M4 22L14 12M8 22l6-6M12 22l2-2" stroke="#a5a5a5" /></svg>
        </StatusBar>
      </Window>
    </>
  );
}
